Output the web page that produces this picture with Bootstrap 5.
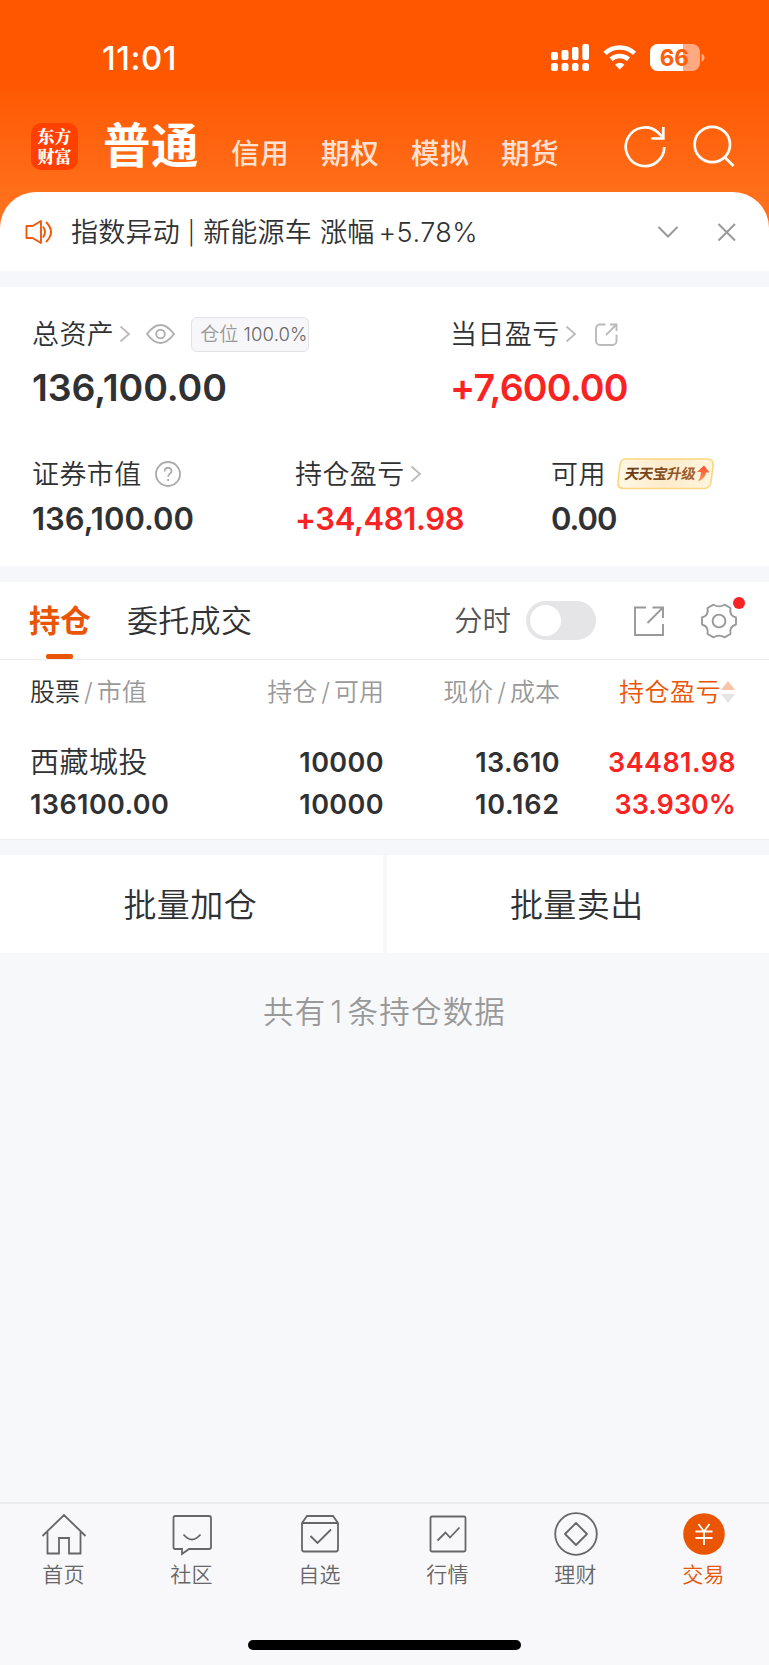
<!DOCTYPE html>
<html lang="zh-CN">
<head>
<meta charset="utf-8">
<meta name="viewport" content="width=device-width, initial-scale=1">
<title>交易</title>
<link href="https://cdn.jsdelivr.net/npm/bootstrap@5.3.0/dist/css/bootstrap.min.css" rel="stylesheet">
<style>
body{font-family:Inter,"Noto Sans CJK SC",sans-serif;color:#303133;background:#f7f8fa;line-height:1}
svg{display:block;flex:none;fill:none;overflow:visible}
.screen{height:1665px;overflow:hidden}
.hero{height:232px;background:linear-gradient(#ff5600 75px,#ff701c 200px)}
.statusbar{height:100px;padding:14px 64px 0 102px}
.clock{font-size:33px;font-weight:550;letter-spacing:.5px;padding-top:2px}
.topnav{height:92px;padding:0 33px 0 31px}
.logo{width:47px;height:47px;border-radius:10px;background:#ff4000;font:900 17px/20px "Noto Serif CJK SC","Noto Sans CJK SC",sans-serif}
.acct-main{font-size:47.5px;font-weight:700;margin-left:25px;letter-spacing:.5px}
.acct{font-size:28.5px;font-weight:500;letter-spacing:.7px;color:#ffe1d2;width:90px;padding-top:17px}
.notice{height:79px;margin-top:-40px;border-radius:36px 36px 0 0;background:#fff;padding:0 33px 0 25px;font-size:27px;letter-spacing:.25px}
.thin{font-weight:350}
.gap16{height:16px;background:#f6f7fa}
.assets{height:279px;padding:29px 0 0 32px}
.r1{display:grid;grid-template-columns:418px 1fr}
.r2{display:grid;grid-template-columns:263px 256px 1fr}
.lab{height:36px;font-size:27px;letter-spacing:.4px}
.big{font-size:37.5px;font-weight:600;line-height:40px;letter-spacing:-.1px}
.mid{font-size:31px;font-weight:600;line-height:36px}
.red{color:#fa2324}
.orange{color:#ea5504}
.pos{height:35px;width:118px;border:1px solid #e2e3e6;border-radius:6px;background:#f7f7fa;font-size:18.5px;color:#666;padding-left:8px;letter-spacing:.15px;white-space:nowrap}
.pos span{color:#999;font-size:19px;margin-right:5px}
.promo{width:97px;height:31px}
.tabs{height:78px;border-bottom:1px solid #ececee;padding:0 32px 0 29px}
.tab1{font-size:31px;font-weight:700;height:77px;position:relative}
.tab1::after{content:"";position:absolute;left:17px;bottom:0;width:27px;height:5px;border-radius:2px;background:#ea5504}
.tab2{font-size:31px;margin-left:36px;letter-spacing:.3px}
.switch{width:70px;height:39px;border-radius:20px;background:#e5e5e7;padding:4px}
.switch i{display:block;width:31px;height:31px;border-radius:50%;background:#fff}
.grid4{display:grid;grid-template-columns:178px 176px 176px 176px;padding-left:30px}
.grid4>*{text-align:right;white-space:nowrap}
.grid4>:first-child{text-align:left}
.ths{height:64px;font-size:25px;align-items:center;color:#999}
.ths .sl{margin:0 4px}
.num{font-size:27px;font-weight:600;letter-spacing:.4px}
.bulk{height:98px;gap:4px}
.bulk>div{background:#fff;font-size:33px;letter-spacing:.4px;padding:3px 2px 0 0}
.total{height:549px;padding-top:42px;font-size:30.5px;line-height:34px;letter-spacing:1.2px;color:#999}
.tabbar{height:163px;border-top:2px solid #ebebed;background:#f8f8fb;color:#666;font-size:21px}
.tabbar .item{width:128px;padding-top:8px}
.item span{padding:8px 1px 0 0;letter-spacing:.2px}
.item svg{stroke:#666;stroke-width:1.8}
.homebar{width:273px;height:10px;border-radius:5px;background:#000}
</style>
</head>
<body>
<div class="screen d-flex flex-column">
  <header class="hero flex-shrink-0 text-white">
    <div class="statusbar d-flex align-items-center">
      <span class="clock me-auto">11:01</span>
      <svg width="154" height="28" viewBox="0 0 154 28" fill="#fff">
        <g fill="#fff"><rect x="0" y="9" width="7" height="8" rx="2"/><rect x="10.5" y="7" width="7" height="10" rx="2"/><rect x="21" y="4" width="6.500" height="13" rx="2"/><rect x="31.300" y="1" width="6.700" height="16" rx="2"/><rect x="0" y="20" width="7" height="8" rx="2.500"/><rect x="10.500" y="20" width="7" height="8" rx="2.500"/><rect x="21" y="20" width="6.500" height="8" rx="2.500"/><rect x="31.300" y="20" width="6.700" height="8" rx="2.500"/></g>
        <path d="M54 10.300A21.500 21.500 0 0 1 83.500 10.300M60 16.200A13.500 13.500 0 0 1 77.500 16.200" stroke="#fff" stroke-width="4.600"/>
        <path d="M68.700 26.500L64 21.800A6.600 6.600 0 0 1 73.400 21.800Z" fill="#fff"/>
        <rect x="99" y="1" width="50" height="27" rx="8" fill="#ffa983"/>
        <path d="M132 1H107a8 8 0 0 0-8 8v11a8 8 0 0 0 8 8h25z" fill="#fff"/>
        <path d="M150.500 10.500q3 1 3 4t-3 4z" fill="#ffa983"/>
        <text x="123.300" y="22.500" text-anchor="middle" font-size="22.500" font-weight="700" fill="#ff5e0a">66</text>
      </svg>
    </div>
    <nav class="topnav d-flex align-items-center">
      <div class="logo d-flex flex-column justify-content-center text-center"><span>东方</span><span>财富</span></div>
      <div class="acct-main">普通</div>
      <div class="d-flex me-auto" style="margin-left:32px"><span class="acct">信用</span><span class="acct">期权</span><span class="acct">模拟</span><span class="acct">期货</span></div>
      <svg width="112" height="44" viewBox="0 0 112 44" stroke="#fff" stroke-width="2.700"><path d="M40.300 23A19.300 19.300 0 1 1 34 8.500L38 12.500M39.300 3V14.500H27.300"/><circle cx="88.300" cy="20.500" r="17.700"/><path d="M100.500 33L109.500 42"/></svg>
    </nav>
  </header>
  <div class="notice flex-shrink-0 d-flex align-items-center thin position-relative">
    <svg width="28" height="26" viewBox="0 0 28 26" stroke="#f0580c" stroke-width="1.900" stroke-linejoin="round"><path d="M1.500 7H7.500L16 2V24L7.500 19H1.500ZM18 7.500Q22 13 18 18.500M21 3Q31 13 21 23"/></svg>
    <span class="me-auto" style="margin-left:18px;padding-top:2px">指数异动 <span style="font-size:23px;position:relative;top:-1px">|</span> 新能源车 涨幅<span style="margin-left:4px;letter-spacing:.5px">+5.78%</span></span>
    <svg width="78" height="20" viewBox="0 0 78 20" stroke="#999" stroke-width="2"><path d="M.5 5L10 14.500L19.500 5M60.500 2L77 18.500M77 2L60.500 18.500"/></svg>
  </div>
  <div class="gap16 flex-shrink-0"></div>

  <section class="assets bg-white flex-shrink-0">
    <div class="r1">
      <div>
        <div class="lab thin d-flex align-items-center">总资产
          <svg style="margin-left:6px" width="10" height="16" viewBox="0 0 10 16" stroke="#bbb" stroke-width="1.800"><path d="M.5.500L9 8L.5 15.500"/></svg>
          <svg style="margin-left:16px" width="29" height="20" viewBox="0 0 29 20" stroke="#b0b0b0" stroke-width="1.900"><path d="M1 10Q14.500-8 28 10Q14.500 28 1 10Z"/><circle cx="14.500" cy="10" r="4.300"/></svg>
          <div class="pos d-flex align-items-center" style="margin-left:16px"><span>仓位</span>100.0%</div>
        </div>
        <div class="big" style="margin-top:16px">136,100.00</div>
      </div>
      <div>
        <div class="lab thin d-flex align-items-center">当日盈亏
          <svg style="margin-left:6px" width="10" height="16" viewBox="0 0 10 16" stroke="#bbb" stroke-width="1.800"><path d="M.5.500L9 8L.5 15.500"/></svg>
          <svg style="margin-left:19px" width="23" height="23" viewBox="0 0 23 23" stroke="#bbb" stroke-width="1.900"><path d="M10.500 1.500H5A4 4 0 0 0 1 5.500V18A4 4 0 0 0 5 22H17.500A4 4 0 0 0 21.500 18V11.500M15 1.500H21.500V8M21.500 1.500L11 12"/></svg>
        </div>
        <div class="big red" style="margin-top:16px;letter-spacing:-.8px">+7,600.00</div>
      </div>
    </div>
    <div class="r2" style="margin-top:48px">
      <div>
        <div class="lab thin d-flex align-items-center">证券市值
          <svg style="margin-left:13px" width="26" height="26" viewBox="0 0 26 26" stroke="#aaa" stroke-width="1.800"><circle cx="13" cy="13" r="12"/><path d="M9.700 10.500C9.700 5.500 16.500 5.700 16.500 10C16.500 12.600 13.100 12.700 13.100 15.800M13.100 18V20"/></svg>
        </div>
        <div class="mid" style="margin-top:9px">136,100.00</div>
      </div>
      <div>
        <div class="lab thin d-flex align-items-center">持仓盈亏
          <svg style="margin-left:6px" width="10" height="16" viewBox="0 0 10 16" stroke="#bbb" stroke-width="1.800"><path d="M.5.500L9 8L.5 15.500"/></svg>
        </div>
        <div class="mid red" style="margin-top:9px;letter-spacing:-.35px">+34,481.98</div>
      </div>
      <div>
        <div class="lab thin d-flex align-items-center">可用
          <svg class="promo" style="margin-left:11px" viewBox="0 0 97 31"><defs><linearGradient id="cream"><stop stop-color="#fff8e6"/><stop offset=".5" stop-color="#fdebcb"/><stop offset="1" stop-color="#fff6df"/></linearGradient><linearGradient id="brown"><stop stop-color="#613719"/><stop offset="1" stop-color="#a6632c"/></linearGradient><linearGradient id="up" x2="0" y2="1"><stop stop-color="#f84a2c"/><stop offset="1" stop-color="#ff9a58"/></linearGradient></defs><g transform="translate(0 -1)"><path d="M9 1H90Q97 1 96 8L94 24Q93 30.500 87 30.500H7Q0 30.500 1 24L3 7Q4 1 9 1Z" fill="url(#cream)" stroke="#fbd57c" stroke-width="1.600"/><text transform="translate(7 21) skewX(-10)" font-size="14.500" font-weight="700" letter-spacing="-.4" fill="url(#brown)">天天宝升级</text><path d="M87 7.500L92.500 14.500H89Q88 21 81 23.500Q84 19 84 14H80Z" fill="url(#up)"/></g></svg>
        </div>
        <div class="mid" style="margin-top:9px;letter-spacing:-1px">0.00</div>
      </div>
    </div>
  </section>
  <div class="gap16 flex-shrink-0"></div>

  <section class="bg-white flex-shrink-0" style="height:257px">
    <div class="tabs d-flex align-items-center">
      <div class="tab1 orange d-flex align-items-center">持仓</div>
      <div class="tab2 thin me-auto">委托成交</div>
      <span class="thin" style="font-size:28.500px;color:#555;margin-right:15px;padding-top:2px">分时</span>
      <div class="switch"><i></i></div>
      <svg style="margin-left:38px" width="30" height="30" viewBox="0 0 30 30" stroke="#999" stroke-width="1.900"><path d="M12 1.500H1V29H29V18M18.500 1.500H29V12M29 1.500L13.500 17"/></svg>
      <div class="position-relative" style="margin-left:37px">
        <svg width="36" height="36" viewBox="0 0 36 36" stroke="#999" stroke-width="1.900" stroke-linejoin="round"><circle cx="18" cy="18" r="6.400"/><path d="M12.500 1.700Q18 5 23.500 1.700L29.500 5Q28 12.500 35 14.500V21.500Q28 23.500 29.500 31L23.500 34.300Q18 31 12.500 34.300L6.500 31Q8 23.500 1 21.500V14.500Q8 12.500 6.500 5Z"/></svg>
        <svg class="position-absolute" style="right:-8px;top:-6px" width="12" height="12"><circle cx="6" cy="6" r="6" fill="#fa2324"/></svg>
      </div>
    </div>
    <div class="grid4 ths thin">
      <div><span style="color:#303133">股票</span><span class="sl">/</span>市值</div>
      <div>持仓<span class="sl">/</span>可用</div><div>现价<span class="sl">/</span>成本</div>
      <div class="d-flex justify-content-end align-items-center"><span class="orange" style="letter-spacing:.5px;margin-right:-1px">持仓盈亏</span><svg width="16" height="22" viewBox="0 0 16 22"><path d="M8 0L15 9H1Z" fill="#f8c5a8"/><path d="M8 22L15 13H1Z" fill="#e5e5e7"/></svg></div>
    </div>
    <div class="grid4 align-items-center" style="height:41px;margin-top:18px">
      <div class="thin" style="font-size:29px;letter-spacing:.5px">西藏城投</div><div class="num">10000</div><div class="num">13.610</div><div class="num red">34481.98</div>
    </div>
    <div class="grid4 align-items-center" style="height:42px">
      <div class="num">136100.00</div><div class="num">10000</div><div class="num" style="letter-spacing:.8px">10.162</div><div class="num red" style="letter-spacing:0">33.930%</div>
    </div>
  </section>
  <div class="gap16 flex-shrink-0" style="border-top:1px solid #eeeff1"></div>
  <div class="bulk thin d-flex flex-shrink-0">
    <div class="flex-fill d-flex align-items-center justify-content-center">批量加仓</div>
    <div class="flex-fill d-flex align-items-center justify-content-center">批量卖出</div>
  </div>
  <div class="total thin text-center flex-shrink-0">共有<span style="margin:0 4px">1</span>条持仓数据</div>

  <footer class="tabbar thin flex-shrink-0">
    <div class="d-flex text-center" style="height:136px">
      <div class="item d-flex flex-column align-items-center"><svg width="44" height="44" viewBox="0 0 44 44"><path d="M.500 24L22 3L43.500 24M5.500 20V41.500H17V26H27V41.500H38.500V20"/></svg><span>首页</span></div>
      <div class="item d-flex flex-column align-items-center"><svg width="44" height="44" viewBox="0 0 44 44"><path d="M5 4H39Q41 4 41 6V35Q41 37 39 37H19L12 42V37H5Q3.500 37 3.500 35V6Q3.500 4 5 4ZM13.500 22.500Q22 32.500 30.500 22.500"/></svg><span>社区</span></div>
      <div class="item d-flex flex-column align-items-center"><svg width="44" height="44" viewBox="0 0 44 44"><path d="M4 11L9 4H35L40 11V37Q40 39.500 38 39.500H6Q4 39.500 4 37ZM4 11H40M12.500 24L19.500 31L33 17.500"/></svg><span>自选</span></div>
      <div class="item d-flex flex-column align-items-center"><svg width="44" height="44" viewBox="0 0 44 44"><rect x="4.500" y="4.500" width="35" height="35" rx="1.500"/><path d="M11.500 28.500L19.500 20.500L24 25.500L33.500 15.500"/></svg><span>行情</span></div>
      <div class="item d-flex flex-column align-items-center"><svg width="44" height="44" viewBox="0 0 44 44"><circle cx="22" cy="22" r="20.800"/><path d="M22 11L33 22L22 33L11 22Z" stroke-linejoin="round"/></svg><span>理财</span></div>
      <div class="item d-flex flex-column align-items-center orange"><svg width="44" height="44" viewBox="0 0 44 44"><circle cx="22" cy="22" r="20.800" fill="#ea5504" stroke="none"/><path d="M16.500 12L22 19.500L27.500 12M22 19.500V33M13.500 19.500H30.500M13.500 26H30.500" stroke="#fff"/></svg><span>交易</span></div>
    </div>
    <div class="homebar mx-auto"></div>
  </footer>
</div>
<script src="https://cdn.jsdelivr.net/npm/bootstrap@5.3.0/dist/js/bootstrap.bundle.min.js"></script>
</body>
</html>
